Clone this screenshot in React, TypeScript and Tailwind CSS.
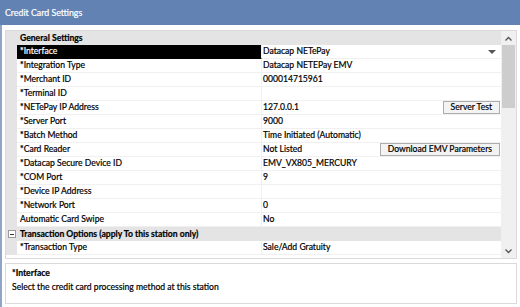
type Row = {
  label: string;
  value?: string;
  button?: string;
  selected?: boolean;
  dropdown?: boolean;
  header?: boolean;
  collapse?: boolean;
};

const rows: Row[] = [
  { label: "General Settings", header: true },
  { label: "*Interface", value: "Datacap NETePay", selected: true, dropdown: true },
  { label: "*Integration Type", value: "Datacap NETEPay EMV" },
  { label: "*Merchant ID", value: "000014715961" },
  { label: "*Terminal ID", value: "" },
  { label: "*NETePay IP Address", value: "127.0.0.1", button: "Server Test" },
  { label: "*Server Port", value: "9000" },
  { label: "*Batch Method", value: "Time Initiated (Automatic)" },
  { label: "*Card Reader", value: "Not Listed", button: "Download EMV Parameters" },
  { label: "*Datacap Secure Device ID", value: "EMV_VX805_MERCURY" },
  { label: "*COM Port", value: "9" },
  { label: "*Device IP Address", value: "" },
  { label: "*Network Port", value: "0" },
  { label: "Automatic Card Swipe", value: "No" },
  { label: "Transaction Options (apply To this station only)", header: true, collapse: true },
  { label: "*Transaction Type", value: "Sale/Add Gratuity" },
];

function GridRow({ row }: { row: Row }) {
  if (row.header) {
    return (
      <div className="flex h-[14px] bg-[#e4e4e4]">
        <div className="w-[11px] flex items-center justify-center">
          {row.collapse && (
            <div className="w-[8px] h-[8px] border border-[#9a9a9a] bg-white flex items-center justify-center">
              <div className="w-[4px] h-px bg-[#333]" />
            </div>
          )}
        </div>
        <div className="font-bold text-black pl-[3px] leading-[14px] whitespace-nowrap">{row.label}</div>
      </div>
    );
  }
  return (
    <div className="flex h-[14px]">
      <div className="w-[11px] bg-[#e4e4e4]" />
      <div
        className={`w-[245px] pl-[3px] leading-[13px] border-b border-r border-[#f0f0f0] whitespace-nowrap ${
          row.selected ? "bg-black text-white border-b-black" : "bg-white text-black"
        }`}
      >
        {row.label}
      </div>
      <div className="flex-1 bg-white border-b border-[#f0f0f0] flex items-center justify-between pl-[1px] pr-[1px] leading-[13px] whitespace-nowrap">
        <span className="text-black">{row.value}</span>
        {row.dropdown && (
          <svg width="8" height="4" viewBox="0 0 8 4" className="mr-[4px]">
            <path d="M0 0h8L4 4z" fill="#555" />
          </svg>
        )}
        {row.button && (
          <div className="h-[13px] border border-[#adadad] bg-[#f3f3f3] px-[7px] leading-[11px] text-black">
            {row.button}
          </div>
        )}
      </div>
    </div>
  );
}

export default function App() {
  return (
    <div
      className="w-[520px] h-[307px] bg-[#f0f0f0] border-l-2 border-[#8fa4c6] text-[8.6px] [-webkit-text-stroke:0.2px_currentColor] flex flex-col"
      style={{ fontFamily: 'Lato, "Segoe UI", sans-serif' }}
    >
      <div className="h-[25px] bg-[#6282b4] text-white text-[8.8px] flex items-center pl-[5px] -ml-[2px]">
        Credit Card Settings
      </div>
      <div className="flex-1 bg-white px-[3px] pt-[5px]">
        <div className="h-[229px] border border-[#dadada] flex">
          <div className="flex-1 overflow-hidden">
            {rows.map((r) => (
              <GridRow key={r.label} row={r} />
            ))}
          </div>
          <div className="w-[15px] bg-[#f0f0f0] flex flex-col items-center">
            <div className="h-[14px] flex items-center">
              <svg width="7" height="5" viewBox="0 0 7 5">
                <path d="M0.5 4.5L3.5 1.5L6.5 4.5" fill="none" stroke="#555" strokeWidth="1.3" />
              </svg>
            </div>
            <div className="w-[13px] h-[63px] bg-[#cdcdcd]" />
            <div className="flex-1" />
            <div className="h-[14px] flex items-center">
              <svg width="7" height="5" viewBox="0 0 7 5">
                <path d="M0.5 0.5L3.5 3.5L6.5 0.5" fill="none" stroke="#555" strokeWidth="1.3" />
              </svg>
            </div>
          </div>
        </div>
        <div className="mt-[4px] h-[41px] border border-[#dadada] px-[6px] pt-[2px]">
          <div className="font-bold text-black leading-[14px]">*Interface</div>
          <div className="text-black leading-[14px]">Select the credit card processing method at this station</div>
        </div>
      </div>
    </div>
  );
}
